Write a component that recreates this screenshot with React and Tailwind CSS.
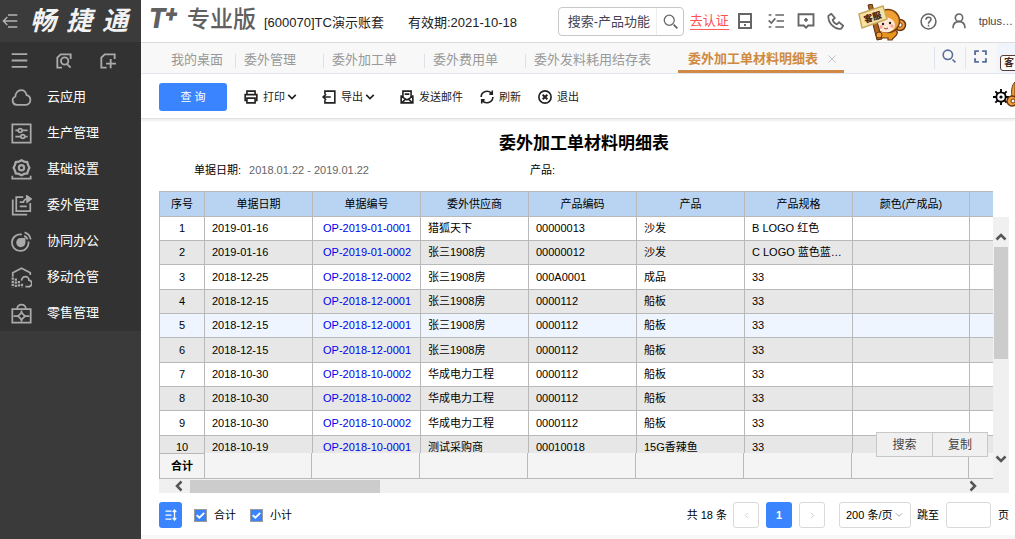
import { useState } from 'react';

const Icon = ({ size = 16, stroke = 2, className = '', children }) => (
  <svg width={size} height={size} viewBox="0 0 24 24" fill="none" stroke="currentColor" strokeWidth={stroke} className={`flex-shrink-0 ${className}`} aria-hidden="true">
    {children}
  </svg>
);

const menu = [
  { label: '云应用', icon: <path d="M6.500 20.500a5 5 0 0 1-1.500-9.600C5 7 8 3.500 11.500 3.500c3.500 0 5.600 2.300 6.300 5.700A5.800 5.800 0 0 1 17.500 20.500z" /> },
  { label: '生产管理', icon: <><path d="M1.500 1.500h21v21h-21zM5 8.500h3M13 8.500h6M5 15.500h6M16 15.500h3" /><circle cx="10.500" cy="8.500" r="2.200" /><circle cx="13.500" cy="15.500" r="2.200" /></> },
  { label: '基础设置', icon: <><path d="M12 1.500l3 1.500 3.500.5 1 3.300 1.500 3.200-1.500 3.200-1 3.300-3.500.5-3 1.500-3-1.500-3.500-.5-1-3.300L3 10l1.500-3.200 1-3.300L9 3z" strokeWidth="2.600" /><circle cx="12" cy="10" r="3" strokeWidth="2.500" /><path d="M1.500 19v3.500h21V19" /></> },
  { label: '委外管理', icon: <><path d="M14 2.500H6v16h16V9M2 5v17.500h16.500M10 8h4M10 13h8M14 9c.5-3 2-4.500 5-4.500" /><path d="M18 1l5 3.500-4.500 3.500z" fill="currentColor" /></> },
  { label: '协同办公', icon: <><path d="M12.500 4A9.500 9.500 0 1 0 20 12M15 5.500a7 7 0 0 1 4 4M15.500 1.500a10 10 0 0 1 7 8" /><path d="M7 13a4 4 0 0 1 4-4h4.500v4.500A4.200 4.200 0 1 1 7 13z" fill="currentColor" /></> },
  { label: '移动仓管', icon: <><path d="M2 11V6.500L12 1.500 22 6.500V9M12 15.500c.5-3 2-4.500 4.500-4.500s4 2 4 4a3.700 3.700 0 0 1-1 7.500h-3" /><path d="M2 12v11M5.500 13v10M9 16v7M12.500 19v4" strokeWidth="2.600" strokeDasharray="2.600 1" /></> },
  { label: '零售管理', icon: <><path d="M1.500 7h21v15.500h-21zM7 7c0-7 10-7 10 0M3 15h6M15 15h6M12 8.500v3M12 18v3" /><path d="M12 11l4 4-4 4-4-4z" /></> },
];

const tabs = ['委外管理', '委外加工单', '委外费用单', '委外发料耗用结存表'];

const columns = ['序号', '单据日期', '单据编号', '委外供应商', '产品编码', '产品', '产品规格', '颜色(产成品)', ''];

const rows = [
  ['2019-01-16', 'OP-2019-01-0001', '猎狐天下', '00000013', '沙发', 'B LOGO 红色'],
  ['2019-01-16', 'OP-2019-01-0002', '张三1908房', '00000012', '沙发', 'C LOGO 蓝色蓝色蓝色'],
  ['2018-12-25', 'OP-2018-12-0002', '张三1908房', '000A0001', '成品', '33'],
  ['2018-12-15', 'OP-2018-12-0001', '张三1908房', '0000112', '船板', '33'],
  ['2018-12-15', 'OP-2018-12-0001', '张三1908房', '0000112', '船板', '33'],
  ['2018-12-15', 'OP-2018-12-0001', '张三1908房', '0000112', '船板', '33'],
  ['2018-10-30', 'OP-2018-10-0002', '华成电力工程', '0000112', '船板', '33'],
  ['2018-10-30', 'OP-2018-10-0002', '华成电力工程', '0000112', '船板', '33'],
  ['2018-10-30', 'OP-2018-10-0002', '华成电力工程', '0000112', '船板', '33'],
  ['2018-10-19', 'OP-2018-10-0001', '测试采购商', '00010018', '15G香辣鱼', '33'],
];

const Chevron = ({ dir = 'down', size = 10, stroke = 5, className = '' }) => {
  const d = {
    down: 'M3 7l9 9 9-9',
    up: 'M3 17l9-9 9 9',
    left: 'M17 3l-9 9 9 9',
    right: 'M7 3l9 9-9 9',
  }[dir];
  return <Icon size={size} stroke={stroke} className={className}><path d={d} /></Icon>;
};

const Sidebar = () => (
  <aside className="z-10 w-[141px] flex-shrink-0 bg-[#3a3a3a] text-white">
    <div className="flex h-[42px] items-center bg-[#3b3b3b] pl-0.5">
      <button aria-label="收起" className="text-[#b5b5b5]">
        <Icon size={16}><path d="M9 3h14M2 12h21M9 21h14M8 6l-6 6 6 6" /></Icon>
      </button>
      <div className="ml-3 flex gap-2.5 text-[26px] leading-none font-bold italic text-[#f2f2f2]">
        <span>畅</span><span>捷</span><span>通</span>
      </div>
    </div>
    <div className="bg-[#323232]">
      <div className="flex h-[37px] items-center justify-between pr-[25px] pl-[11px] text-[#aaa]">
        <button aria-label="菜单"><Icon size={17} stroke={2.500}><path d="M1 3h22M1 12h22M1 21h22" /></Icon></button>
        <button aria-label="查找"><Icon size={16} stroke={2.800}><path d="M9 22H2V7l5-5h15v7M17 17l5 5" /><circle cx="13" cy="12" r="5.500" /></Icon></button>
        <button aria-label="新增"><Icon size={16} stroke={2.800}><path d="M10 22H2V7l5-5h15v7M16 9v14M9 16h15" /></Icon></button>
      </div>
      <nav>
        {menu.map(m => (
          <a key={m.label} href="#" className="flex h-9 items-center gap-[15px] pl-[11px] text-[13px]">
            <Icon size={21} className="text-[#aaa]">{m.icon}</Icon>
            {m.label}
          </a>
        ))}
      </nav>
    </div>
  </aside>
);

const Monkey = () => (
  <svg width="50" height="38" viewBox="0 0 50 38" aria-label="客服" className="flex-shrink-0">
    <circle cx="42" cy="21" r="5.500" fill="#f0a03a" stroke="#6b3510" strokeWidth="1.500" />
    <circle cx="42" cy="21" r="2.200" fill="#fff" stroke="#6b3510" />
    <path d="M21 28c2-4 21-4 18 2-2 4-4 3-5 6h-4v-2h-9z" fill="#e8951f" stroke="#6b3510" strokeWidth="1.200" />
    <circle cx="30" cy="17" r="11.500" fill="#efa035" stroke="#7a3d10" strokeWidth="1.500" />
    <ellipse cx="28" cy="21" rx="9" ry="7.500" fill="#ffe9d8" />
    <circle cx="25" cy="20" r="1.200" fill="#33190c" />
    <circle cx="32" cy="19" r="1.200" fill="#33190c" />
    <circle cx="23" cy="23" r="1.700" fill="#f7a59a" />
    <circle cx="34" cy="22" r="1.700" fill="#f7a59a" />
    <path d="M26 24q2 2 4 0" fill="none" stroke="#a0402a" />
    <path d="M10 1l4-1 10 35-5 1z" fill="#a8651f" stroke="#5a2e0b" />
    <path d="M1 10L25 2l4 13L4 24z" fill="#f6e3a3" stroke="#c9a860" strokeWidth="1.500" />
    <text x="7" y="19" fontSize="9" fontWeight="900" fill="#4a2412" transform="rotate(-17 7 19)">客服</text>
    <circle cx="21" cy="31" r="3" fill="#efa035" stroke="#6b3510" />
  </svg>
);

const Header = () => (
  <header className="flex h-[43px] items-center border-b border-[#dcdcdc] pr-0.5 pl-2 text-[#222]">
    <div className="flex items-center pb-1 leading-none text-[#606060]">
      <div className="flex w-[38px] items-start font-['Roboto',sans-serif] font-black italic">
        <span className="text-[27px] leading-7">T</span>
        <span className="text-[23px] leading-5">+</span>
      </div>
      <span className="text-[23px] font-medium">专业版</span>
    </div>
    <span className="ml-2 pt-1 text-[13px] whitespace-nowrap">[600070]TC演示账套</span>
    <span className="ml-6 pt-1 text-[13px] whitespace-nowrap">有效期:2021-10-18</span>
    <div className="ml-auto flex items-center text-[#666]">
      <div className="flex h-[29px] w-[126px] items-center rounded border border-[#c8c8c8]">
        <input aria-label="搜索" placeholder="搜索-产品功能" className="h-full w-[98px] border-r border-[#eee] pl-[9px] text-[13px] outline-none placeholder:text-[#445]" />
        <button aria-label="搜索产品功能" className="pl-1.5"><Icon size={15}><circle cx="10" cy="10" r="8" /><path d="M17 17l6 6" strokeWidth="3" /></Icon></button>
      </div>
      <a href="#" className="ml-1.5 border-b border-[#ff5a5a] text-[13px] leading-4 whitespace-nowrap text-[#ff5050]">去认证</a>
      <button aria-label="设备" className="ml-2"><Icon size={16} stroke={3}><path d="M3 1.500h18v21H3zM3 13.500h18" /><path d="M10.500 18h3" /></Icon></button>
      <button aria-label="任务" className="ml-[15px]"><Icon size={16} stroke={2.500}><path d="M11 3h13M13 12h11M11 21h13M1 3h4M1 11l4 4 6-7M1 21h4" /></Icon></button>
      <button aria-label="消息" className="ml-[13px]"><Icon size={18} stroke={2.500}><path d="M2 3h20v15h-7l-3 3-3-3H2z" /><path d="M12 8v5M9.500 10.500h5" /></Icon></button>
      <button aria-label="电话" className="ml-3"><Icon size={17} stroke={2.500}><path d="M2 4l4-3 5 6-3 3c1 3 3.500 5.500 6 6l3-3 6 5-3 4C11 24 1 14 2 4z" /></Icon></button>
      <button aria-label="客服" className="ml-3.5 pt-1"><Monkey /></button>
      <button aria-label="帮助" className="ml-3"><Icon size={17} stroke={2.200}><circle cx="12" cy="12" r="10.500" /><path d="M8.500 9.500c0-5 7-4.500 7-.5 0 2.500-3.500 2.500-3.500 6M12 16.500v2.500" /></Icon></button>
      <button aria-label="用户" className="ml-3.5"><Icon size={16} stroke={2.400}><circle cx="12" cy="7" r="5.500" /><path d="M3 23c0-6 3-10 9-10s9 4 9 10" /></Icon></button>
      <span className="ml-3 text-[11px] text-[#444]">tplus…</span>
    </div>
  </header>
);

const TabBar = () => (
  <div className="flex h-[31px] border-b border-[#e4e6ee] bg-[#f8f8f8] text-[13px] whitespace-nowrap text-[#999]">
    <button className="flex items-center pt-1 pr-3 pl-[30px]">我的桌面</button>
    {tabs.map(t => (
      <button key={t} className="relative flex items-center pt-1 pr-[27px] pl-[9px]">
        <i className="absolute top-[11px] left-0 h-3.5 w-px bg-[#e0e0e8]" />
        {t}
      </button>
    ))}
    <button className="flex items-center gap-2.5 border-b-3 border-[#d08a45] pt-1 pr-2 pl-2.5 font-bold text-[#cf8a42]">
      委外加工单材料明细表
      <Icon size={8} stroke={3} className="text-[#c4c4c4]"><path d="M1 1l22 22M23 1L1 23" /></Icon>
    </button>
    <div className="ml-auto flex py-1 text-[#5a6f9c]">
      <button aria-label="查找页签" className="w-[31px] border-l border-[#e0e4ee] pb-1 pl-[7px]"><Icon size={14} stroke={2.800}><circle cx="10" cy="10" r="8" /><path d="M18 18l5 5" /></Icon></button>
      <button aria-label="全屏" className="w-8 border-l border-[#e0e4ee] pb-1 pl-2"><Icon size={13} stroke={3.500}><path d="M2 9V2h7M15 2h7v7M22 15v7h-7M9 22H2v-7" /></Icon></button>
      <div className="-my-1 w-[18px] bg-[#eff4fd]" />
    </div>
  </div>
);

const ToolButton = ({ label, menu: hasMenu, children }) => (
  <button className={`flex items-center gap-[5px] text-[11px] whitespace-nowrap ${hasMenu ? 'pr-2' : ''}`}>
    <Icon size={14} stroke={2.800}>{children}</Icon>
    <span className="flex items-center gap-0.5">
      {label}
      {hasMenu && <Chevron stroke={4} />}
    </span>
  </button>
);

const Toolbar = () => (
  <div className="flex h-[45px] items-center gap-[17px] border-b border-[#e2e2e2] pt-0.5 pr-1.5 pl-[18px] text-[#222] shadow-[0_2px_2px_#eee]">
    <button className="h-7 w-[68px] rounded-[3px] bg-[#3a85ff] text-[11px] text-white">查 询</button>
    <ToolButton label="打印" menu><path d="M5 8V2h14v6M5 18H2V8h20v10h-3M5 14h14v8H5z" /></ToolButton>
    <ToolButton label="导出" menu><path d="M5 7V2h17v20H5v-5M1 12h14M7 7l-5 5 5 5" /></ToolButton>
    <ToolButton label="发送邮件"><path d="M5 12V2h14v10M2 9v13h20V9M2 11l10 6 10-6M8 7h8M3 22l6-6M21 22l-6-6" /></ToolButton>
    <ToolButton label="刷新"><path d="M2 12C2 2 15-1 20 6M22 12c0 10-13 13-18 6M21 1v6h-5M3 23v-6h5" /></ToolButton>
    <ToolButton label="退出"><circle cx="12" cy="12" r="10.500" /><path d="M8 8l8 8M16 8l-8 8" strokeWidth="3.500" /></ToolButton>
    <button aria-label="设置" className="ml-auto text-black">
      <Icon size={16} stroke={2.800}>
        <circle cx="12" cy="12" r="7" />
        <path d="M12 0v5M12 19v5M0 12h5M19 12h5M3.500 3.500l3.500 3.500M17 17l3.500 3.500M20.500 3.500L17 7M7 17l-3.500 3.500" />
        <circle cx="12" cy="12" r="1" />
      </Icon>
    </button>
  </div>
);

const ReportTable = () => (
  <table className="w-[1010px] table-fixed border-separate border-spacing-0 border-t border-l border-[#b9b9b9]">
    <colgroup>
      <col className="w-[45px]" />
      {columns.slice(1, 7).map(c => <col key={c} className="w-[108px]" />)}
      <col className="w-[117px]" />
      <col />
    </colgroup>
    <thead>
      <tr className="h-[25px] bg-[#b9d4f3]">
        {columns.map(c => <th key={c} className="border-r border-b border-[#b9b9b9] p-0 font-normal">{c}</th>)}
      </tr>
    </thead>
    <tbody>
      {rows.map((r, i) => (
        <tr key={i} className={`h-6 nth-[3n]:h-[25px] ${i === 4 ? 'bg-[#eef5ff]' : i % 2 ? 'bg-[#e7e7e7]' : 'bg-white'}`}>
          <td className="border-r border-b border-[#b9b9b9] p-0 text-center">{i + 1}</td>
          {r.map((v, j) => (
            <td key={j} className="truncate border-r border-b border-[#b9b9b9] py-0 pr-1.5 pl-[7px]">
              {j === 1 ? <a href="#" className="pl-[3px] text-[#0000ee]">{v}</a> : v}
            </td>
          ))}
          <td className="border-r border-b border-[#b9b9b9]" />
          <td className="border-r border-b border-[#b9b9b9]" />
        </tr>
      ))}
    </tbody>
  </table>
);

const TotalRow = () => (
  <table className="w-[1010px] table-fixed border-separate border-spacing-0 border-l border-[#b9b9b9] bg-[#f4f4f4]">
    <tbody>
      <tr className="h-[26px]">
        <th className="w-[45px] border-t border-r border-b border-[#b9b9b9] p-0">合计</th>
        <td className="w-[107px] border-r border-b border-[#b9b9b9]" />
        {columns.slice(2, 7).map(c => <td key={c} className="w-[108px] border-r border-b border-[#b9b9b9]" />)}
        <td className="w-[117px] border-r border-b border-[#b9b9b9]" />
        <td className="border-b border-[#b9b9b9]" />
      </tr>
    </tbody>
  </table>
);

const Check = ({ label }) => (
  <label className="flex items-center gap-[7px]">
    <span className="relative flex">
      <input type="checkbox" defaultChecked className="peer size-[13px] appearance-none border border-[#999] checked:bg-[#3a85ff]" />
      <Icon size={9} stroke={5} className="pointer-events-none absolute top-0.5 left-0.5 hidden text-white peer-checked:block"><path d="M2 11l7 7L22 5" /></Icon>
    </span>
    {label}
  </label>
);

const Footer = () => {
  const [page, setPage] = useState('');
  return (
    <footer className="flex h-[42px] items-center pt-0.5 pr-1.5 whitespace-nowrap">
      <button aria-label="行高" className="flex h-[26px] w-[23px] items-center justify-center rounded-[3px] bg-[#3a85ff] text-white">
        <Icon size={12} stroke={2.500}><path d="M1 4h12M1 12h12M1 20h12M19 3v18M15.500 6L19 2l3.500 4M15.500 18l3.500 4 3.500-4" /></Icon>
      </button>
      <div className="ml-3 flex gap-3.5">
        <Check label="合计" />
        <Check label="小计" />
      </div>
      <span className="mr-1.5 ml-auto">共 18 条</span>
      <div className="flex gap-[7px]">
        <button aria-label="上一页" className="flex size-[26px] items-center justify-center rounded-[3px] border border-[#d9d9d9] text-[#ccc]"><Chevron dir="left" size={7} stroke={3} /></button>
        <button className="size-[26px] rounded-[3px] bg-[#3a85ff] font-bold text-white">1</button>
        <button aria-label="下一页" className="flex size-[26px] items-center justify-center rounded-[3px] border border-[#d9d9d9] text-[#ccc]"><Chevron dir="right" size={7} stroke={3} /></button>
      </div>
      <div className="relative ml-3.5">
        <select aria-label="每页条数" className="h-[26px] w-[72px] appearance-none rounded-[3px] border border-[#d9d9d9] bg-white pl-1.5">
          <option>200 条/页</option>
          <option>500 条/页</option>
        </select>
        <Chevron size={8} stroke={3} className="pointer-events-none absolute top-[9px] right-2 text-[#aaa]" />
      </div>
      <label className="ml-1.5 flex items-center gap-[7px]">
        跳至
        <input value={page} onChange={e => setPage(e.target.value)} className="h-[26px] w-[45px] rounded-[3px] border border-[#d9d9d9] px-1" />
        页
      </label>
    </footer>
  );
};

export default function App() {
  return (
    <div className="relative flex h-screen overflow-hidden bg-white font-['Liberation_Sans','Noto_Sans_CJK_SC',sans-serif] text-black">
      <Sidebar />
      <main className="flex min-w-0 flex-1 flex-col">
        <Header />
        <TabBar />
        <Toolbar />
        <section className="flex min-h-0 flex-1 flex-col pl-[18px] text-[11px]">
          <h1 className="mt-[15px] mr-1.5 text-center text-[17px] leading-5 font-bold">委外加工单材料明细表</h1>
          <div className="mt-2 flex h-[29px] pl-[35px] leading-4">
            <p className="w-[336px]">单据日期:<span className="ml-2 text-[#666]">2018.01.22 - 2019.01.22</span></p>
            <p>产品:</p>
          </div>
          <div className="relative mr-1.5 flex min-h-0 flex-1">
            <div className="flex min-w-0 flex-1 flex-col">
              <div className="min-h-0 flex-1 overflow-hidden"><ReportTable /></div>
              <div className="flex-shrink-0 overflow-hidden"><TotalRow /></div>
            </div>
            <div className="mt-[26px] flex w-4 flex-col items-center bg-[#f0f0f0] pt-3.5 pb-3.5 text-[#555]">
              <Chevron dir="up" size={12} />
              <div className="mt-1 h-28 w-3.5 bg-[#ccc]" />
              <Chevron size={12} className="mt-auto" />
            </div>
            <div className="absolute right-[21px] bottom-[22px] flex text-xs text-[#444]">
              <button className="h-[25px] w-[57px] border border-[#c8c8c8] bg-[#f0f0f0]">搜索</button>
              <button className="-ml-px h-[25px] w-14 border border-[#c8c8c8] bg-[#f0f0f0]">复制</button>
            </div>
          </div>
          <div className="mr-1.5 flex h-3.5 items-center bg-[#f0f0f0] pr-[30px] pl-3.5 text-[#555]">
            <Chevron dir="left" size={12} />
            <div className="ml-[5px] h-[13px] w-[190px] bg-[#ccc]" />
            <Chevron dir="right" size={12} className="ml-auto" />
          </div>
          <Footer />
        </section>
        <div className="h-1 bg-[#f8f8f8]" />
      </main>

      {/* docked service helper, half hidden behind the window edge */}
      <div className="absolute top-[55px] -right-2.5 flex h-4 w-[25px] items-center rounded-[3px] border border-[#5a3a34] bg-white pl-[3px] text-[10px] leading-none font-bold text-[#4a2a20]">客</div>
      <svg width="9" height="30" viewBox="0 0 9 30" className="absolute top-20 right-0">
        <path d="M9 2C6 5 5 10 6 17l3 3z" fill="#efa035" stroke="#6b3510" />
        <circle cx="6" cy="21" r="5" fill="#f0a03a" stroke="#6b3510" strokeWidth="1.500" />
        <circle cx="7" cy="21" r="2" fill="#fff" stroke="#6b3510" />
      </svg>
    </div>
  );
}
